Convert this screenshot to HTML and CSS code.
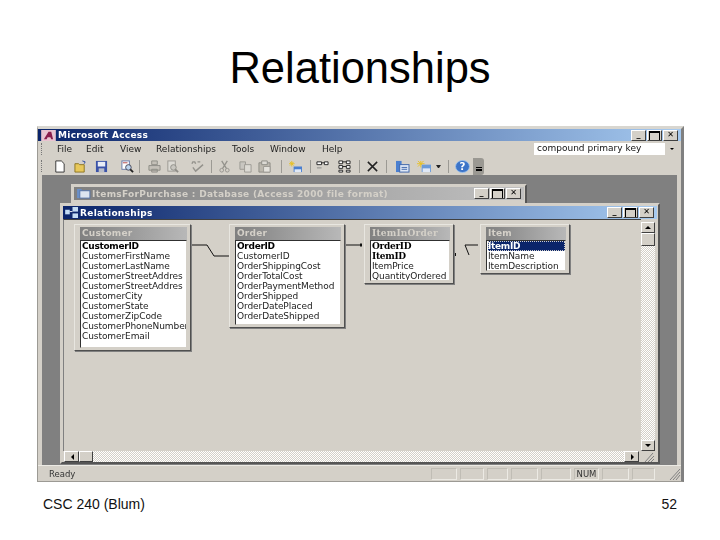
FILE: index.html
```html
<!DOCTYPE html>
<html lang="en">
<head>
<meta charset="utf-8">
<title>Relationships</title>
<link rel="stylesheet" href="styles.css">
</head>
<body>
<main class="slide">
  <h1 class="slide-title">Relationships</h1>
  <section class="app">
    <div class="titlebar app-title">
      <svg class="tb-icon" viewBox="0 0 16 12"><rect width="16" height="12" fill="#e9c3d0"/><path d="M3 10 8 2h3l2 8h-2l-1-2H7l-1 2z" fill="#8a1c4c"/></svg>
      <span class="title-text">Microsoft Access</span>
      <span class="win-btns"><i class="wb">_</i><i class="wb wb-max"></i><i class="wb">✕</i></span>
    </div>
    <div class="menubar">
      <span class="grip"></span>
      <nav class="menus"><span class="m1">File</span><span class="m2">Edit</span><span class="m3">View</span><span class="m4">Relationships</span><span class="m5">Tools</span><span class="m6">Window</span><span class="m7">Help</span></nav>
      <div class="combo"><span>compound primary key</span></div>
      <span class="combo-arrow"></span>
    </div>
    <div class="toolbar">
      <span class="grip"></span>
      <svg class="ti" viewBox="0 0 14 14"><path d="M3 1h6l3 3v9H3z" fill="#fff" stroke="#333"/></svg>
      <svg class="ti ml6" viewBox="0 0 14 14"><path d="M1 4h4l1 1h5v8H1z" fill="#e8c85a" stroke="#8a7420"/><path d="M9 1l3 1-1 2" fill="none" stroke="#2a4a9c"/></svg>
      <svg class="ti ml6" viewBox="0 0 14 14"><rect x="1" y="1" width="12" height="12" fill="#3a52a8"/><rect x="3" y="2" width="8" height="5" fill="#e8ecf6"/><rect x="4" y="9" width="6" height="4" fill="#b8bcc8"/></svg>
      <svg class="ti ml11" viewBox="0 0 14 14"><rect x="1" y="1" width="8" height="9" fill="#fff" stroke="#6678a8"/><circle cx="8" cy="8" r="3" fill="#bcd4ee" stroke="#445"/><path d="M10 10l3 3" stroke="#222" stroke-width="2"/><path d="M2 3h5" stroke="#b04040"/></svg>
      <i class="sep ml4"></i>
      <svg class="ti ml7" viewBox="0 0 14 14"><path d="M4 1h6v4H4zM1 6h12v5H1zM4 10h6v3H4z" fill="#c4c0b8" stroke="#8e8c86"/></svg>
      <svg class="ti ml3" viewBox="0 0 14 14"><rect x="2" y="1" width="8" height="11" fill="#dcdad4" stroke="#9a9892"/><circle cx="8" cy="8" r="3" fill="#c8c6c0" stroke="#8e8c86"/><path d="M10 10l3 3" stroke="#8e8c86" stroke-width="2"/></svg>
      <svg class="ti ml10" viewBox="0 0 14 14"><path d="M1 4l1-2h2l1 2M7 2h3M2 8l3 4 8-7" fill="none" stroke="#94928c" stroke-width="1.5"/></svg>
      <i class="sep ml6"></i>
      <svg class="ti ml5" viewBox="0 0 14 14"><path d="M4 1l5 8M10 1L5 9" stroke="#94928c" stroke-width="1.4"/><circle cx="4" cy="11" r="2" fill="none" stroke="#94928c"/><circle cx="10" cy="11" r="2" fill="none" stroke="#94928c"/></svg>
      <svg class="ti ml6" viewBox="0 0 14 14"><path d="M1 2h6v8H1z" fill="#c8c6c0" stroke="#9a9892"/><path d="M6 5h7v8H6z" fill="#dcdad4" stroke="#9a9892"/></svg>
      <svg class="ti ml4" viewBox="0 0 14 14"><path d="M1 3h12v10H1z" fill="#bcb8ae" stroke="#8e8c86"/><path d="M4 1h6v4H4z" fill="#dcdad4" stroke="#8e8c86"/><path d="M6 7h7v6H6z" fill="#e4e2dc" stroke="#9a9892"/></svg>
      <i class="sep ml9"></i>
      <svg class="ti ml6" viewBox="0 0 14 14"><path d="M3 1v6M0 4h6M1 2l4 4M5 2L1 6" stroke="#e8c020"/><rect x="5" y="7" width="9" height="6" fill="#4a7fd0"/><rect x="6" y="10" width="7" height="3" fill="#dfe8f6"/></svg>
      <i class="sep ml7"></i>
      <svg class="ti ml4" viewBox="0 0 14 14"><path d="M1 2h5v3H1zM9 2h4v3H9zM6 3h3" fill="#fff" stroke="#222"/><path d="M1 8h5v1H1z" fill="#888"/></svg>
      <svg class="ti ml7" viewBox="0 0 14 14"><path d="M1 1h4v3H1zM9 1h4v3H9zM1 6h4v3H1zM9 6h4v3H9zM1 11h4v2H1zM9 11h4v2H9zM5 2h4M5 7h4" fill="#fff" stroke="#222"/></svg>
      <i class="sep ml7"></i>
      <svg class="ti ml5" viewBox="0 0 14 14"><path d="M2 2l10 10M12 2L2 12" stroke="#222" stroke-width="1.6"/></svg>
      <i class="sep ml6"></i>
      <svg class="ti ml8" viewBox="0 0 16 14"><rect x="1" y="1" width="6" height="12" fill="#4a7fd0"/><rect x="5" y="5" width="10" height="8" fill="#dfe8f6" stroke="#3a62a8"/><path d="M7 8h6M7 10h6" stroke="#3a62a8"/></svg>
      <svg class="ti ml7" viewBox="0 0 16 14"><path d="M4 1v7M0 4h8M1 1l6 6M7 1L1 7" stroke="#e8c020"/><rect x="5" y="5" width="10" height="8" fill="#6a9ad8"/><rect x="6" y="9" width="8" height="4" fill="#dfe8f6"/></svg>
      <span class="mini-arrow ml4"></span>
      <i class="sep ml7"></i>
      <svg class="ti ml6" viewBox="0 0 16 14"><ellipse cx="8" cy="7" rx="7.5" ry="6.5" fill="#3c74c8" stroke="#9cc0ec"/><text class="help-q" x="8" y="11">?</text></svg>
      <span class="chevron ml3"><i></i></span>
    </div>
    <div class="mdi">
      <section class="mdi-win db-win">
        <div class="titlebar inactive">
          <svg class="tb-icon" viewBox="0 0 16 12"><rect x="1" y="1" width="5" height="10" fill="#6a90c8"/><rect x="4" y="3" width="11" height="8" fill="#dce4f0" stroke="#5070a8"/></svg>
          <span class="title-text">ItemsForPurchase : Database (Access 2000 file format)</span>
          <span class="win-btns"><i class="wb">_</i><i class="wb wb-max"></i><i class="wb">✕</i></span>
        </div>
      </section>
      <section class="mdi-win rel-win">
        <div class="titlebar">
          <svg class="tb-icon" viewBox="0 0 16 12"><rect y="3" width="5" height="5" fill="#c4dcf4"/><rect x="8" width="6" height="5" fill="#c4dcf4"/><rect x="8" y="7" width="6" height="5" fill="#c4dcf4"/><path d="M5 5h3" stroke="#fff"/></svg>
          <span class="title-text">Relationships</span>
          <span class="win-btns"><i class="wb">_</i><i class="wb wb-max"></i><i class="wb">✕</i></span>
        </div>
        <div class="rel-body">
          <div class="canvas">
            <svg class="links" viewBox="0 0 576 230" width="576" height="230">
              <path d="M127 25h16l7 11h15" />
              <path d="M281 25h16" />
              <rect x="296" y="23.5" width="2" height="3" />
              <rect x="390" y="33" width="2" height="3" />
              <path d="M414 25h-13l4 10" />
            </svg>
            <article class="tbl t-customer">
              <h2>Customer</h2>
              <ul>
                <li class="pk">CustomerID</li><li>CustomerFirstName</li><li>CustomerLastName</li><li>CustomerStreetAddres</li><li>CustomerStreetAddres</li><li>CustomerCity</li><li>CustomerState</li><li>CustomerZipCode</li><li>CustomerPhoneNumber</li><li>CustomerEmail</li>
              </ul>
            </article>
            <article class="tbl t-order">
              <h2>Order</h2>
              <ul>
                <li class="pk">OrderID</li><li>CustomerID</li><li>OrderShippingCost</li><li>OrderTotalCost</li><li>OrderPaymentMethod</li><li>OrderShipped</li><li>OrderDatePlaced</li><li>OrderDateShipped</li>
              </ul>
            </article>
            <article class="tbl t-iio">
              <h2 class="serif">ItemInOrder</h2>
              <ul>
                <li class="pk serif">OrderID</li><li class="pk serif">ItemID</li><li>ItemPrice</li><li>QuantityOrdered</li>
              </ul>
            </article>
            <article class="tbl t-item">
              <h2>Item</h2>
              <ul>
                <li class="pk sel">ItemID</li><li>ItemName</li><li>ItemDescription</li>
              </ul>
            </article>
          </div>
          <div class="vscroll"><i class="sb-btn up"></i><i class="sb-thumb"></i><span class="sb-track"></span><i class="sb-btn down"></i></div>
          <div class="hscroll"><i class="sb-btn left"></i><i class="sb-thumb"></i><span class="sb-track"></span><i class="sb-btn right"></i></div>
          <div class="corner"><svg class="hatch" viewBox="0 0 12 10"><path d="M2 10l8-9M5 10l6-6M8 10l3-3" stroke="#808080" fill="none"/></svg></div>
        </div>
      </section>
    </div>
    <footer class="status">
      <span class="st-ready">Ready</span>
      <span class="panel w26"></span><span class="panel w24"></span><span class="panel w21"></span><span class="panel w27"></span><span class="panel w30"></span><span class="panel w25">NUM</span><span class="panel w27"></span><span class="panel w23"></span>
      <svg class="st-grip" viewBox="0 0 13 12"><path d="M2 12l10-11M5 12l7-8M8 12l4-5" stroke="#808080" fill="none"/></svg>
    </footer>
  </section>
  <footer class="slide-foot"><span>CSC 240 (Blum)</span><span>52</span></footer>
</main>
</body>
</html>
```
FILE: styles.css
```css
* { box-sizing: border-box; }
html, body { margin: 0; padding: 0; background: #fff; }
body { width: 720px; height: 540px; overflow: hidden; font-family: "Liberation Sans", Arial, sans-serif; }
.slide { width: 720px; height: 540px; display: flex; flex-direction: column; }
.slide-title { margin: 0; height: 126px; padding-top: 43px; text-align: center; font-weight: 400; font-size: 43.5px; line-height: 50px; color: #000; }
.app { margin-left: 37px; width: 647px; height: 356px; background: #d4d0c8; border: 1px solid #9c9a94; border-top: 3px solid #d8d6d0; border-right: 3px solid #808080; display: flex; flex-direction: column; filter: blur(.4px); font-family: "DejaVu Sans", sans-serif; }
.slide-foot { flex: 1; display: flex; justify-content: space-between; padding: 13px 43px 0 43px; font-size: 14px; line-height: 18px; color: #111; }

.titlebar { height: 13px; display: flex; align-items: center; background: linear-gradient(90deg, #0a246a, #a6caf0); color: #fff; padding: 0 3px 0 2px; flex: none; }
.app-title { height: 12px; padding-left: 3px; }
.titlebar.inactive { background: linear-gradient(90deg, #808080, #c0c0c0); color: #d4d0c8; }
.tb-icon { width: 15px; height: 11px; flex: none; margin-right: 2px; }
.db-win .tb-icon { margin-right: 1px; }
.rel-win .tb-icon { margin-right: 0; }
.title-text { font-size: 9px; font-weight: 700; line-height: 12px; white-space: nowrap; letter-spacing: .3px; }
.win-btns { margin-left: auto; display: flex; }
.wb { width: 15px; height: 11px; margin-left: 1px; background: #d4d0c8; border: 1px solid; border-color: #fff #404040 #404040 #fff; color: #000; font: 700 8px/8px "DejaVu Sans", sans-serif; text-align: center; overflow: hidden; }
.wb-max::after { content: ""; display: block; margin: 0 auto; width: 9px; height: 7px; border: 1px solid #000; border-top-width: 2px; }

.menubar { height: 16px; display: flex; align-items: center; flex: none; padding-left: 3px; font-size: 9px; color: #222; }
.grip { width: 2px; height: 12px; border-left: 1px dotted #777; flex: none; }
.menus { width: 491px; display: flex; padding-left: 14px; }
.menus span { white-space: nowrap; flex: none; }
.m1 { width: 29px; } .m2 { width: 34px; } .m3 { width: 36px; } .m4 { width: 76px; } .m5 { width: 38px; } .m6 { width: 52px; }
.combo { width: 131px; height: 12px; background: #fff; line-height: 11px; padding-left: 3px; color: #111; white-space: nowrap; overflow: hidden; }
.combo-arrow { margin-left: 5px; width: 0; height: 0; border: 2px solid transparent; border-top: 2px solid #000; border-bottom: 0; }

.toolbar { height: 18px; display: flex; align-items: center; flex: none; padding-left: 3px; }
.toolbar .grip { margin-right: 9px; }
.ti { width: 15px; height: 13px; flex: none; }
.ml3 { margin-left: 3px; } .ml4 { margin-left: 4px; } .ml5 { margin-left: 5px; } .ml6 { margin-left: 6px; } .ml7 { margin-left: 7px; } .ml8 { margin-left: 8px; } .ml9 { margin-left: 9px; } .ml10 { margin-left: 10px; } .ml11 { margin-left: 11px; }
.sep { width: 1px; height: 13px; background: #9c9a94; flex: none; }
.mini-arrow { width: 5px; height: 0; border: 2px solid transparent; border-top: 3px solid #222; border-bottom: 0; flex: none; }
.help-q { font: 700 11px "DejaVu Sans", sans-serif; fill: #fff; text-anchor: middle; }
.chevron { width: 11px; height: 17px; background: #9a9892; border-radius: 0 3px 3px 0; position: relative; flex: none; }
.chevron i { position: absolute; left: 3px; bottom: 3px; width: 6px; height: 5px; border-top: 1px solid #000; background: linear-gradient(#000 2px, transparent 2px) 0 1px no-repeat; }

.mdi { flex: 1; position: relative; margin: 0 4px; background: #808080; }
.mdi-win { position: absolute; background: #d4d0c8; border: 2px solid #d4d0c8; border-right-color: #555; border-bottom-color: #555; padding: 1px 1px 0 1px; display: flex; flex-direction: column; }
.db-win { left: 29px; top: 9px; width: 456px; height: 24px; }
.rel-win { left: 18px; top: 28px; width: 600px; height: 261px; }
.rel-body { flex: 1; display: grid; grid-template-columns: 578px 14px; grid-template-rows: 232px 11px; min-height: 0; }

.canvas { position: relative; overflow: hidden; border-left: 1px solid #808080; border-top: 1px solid #404040; }
.links { position: absolute; left: 0; top: 0; }
.links path { fill: none; stroke: #111; stroke-width: 1; }
.links rect { fill: #111; }
.tbl { position: absolute; background: #d4d0c8; border: 1px solid; border-color: #e8e6e0 #505050 #505050 #e8e6e0; box-shadow: inset 0 0 0 1px #d4d0c8, 1px 1px 0 #808080; padding: 2px 3px 2px 5px; display: flex; flex-direction: column; }
.tbl h2 { margin: 0; height: 13px; font-size: 9px; line-height: 13px; font-weight: 700; color: #d4d0c8; padding-left: 2px; background: linear-gradient(90deg, #808080, #b8b8b8); flex: none; letter-spacing: .2px; }
.tbl ul { list-style: none; margin: 0; padding: 0 0 0 1px; background: #fff; border: 1px solid; border-color: #303030 #d4d0c8 #d4d0c8 #303030; flex: 1; overflow: hidden; }
.tbl li { height: 10px; font-size: 9px; line-height: 10px; color: #222; white-space: nowrap; letter-spacing: -.08px; }
.tbl li.pk { font-weight: 700; color: #000; letter-spacing: -.3px; }
.tbl .serif { font-family: "DejaVu Serif", serif; }
.tbl li.sel { background: #0a246a; color: #fff; outline: 1px dotted #ccc; outline-offset: -1px; }
.t-customer { left: 10px; top: 4px; width: 117px; height: 127px; }
.t-order { left: 165px; top: 4px; width: 116px; height: 104px; }
.t-iio { left: 300px; top: 4px; width: 90px; height: 60px; }
.t-item { left: 416px; top: 4px; width: 90px; height: 50px; }

.vscroll, .hscroll { display: flex; background: repeating-conic-gradient(#fff 0 25%, #d4d0c8 0 50%) 0 0 / 2px 2px; }
.vscroll { flex-direction: column; margin-top: 3px; }
.hscroll { margin: 0 2px 0 1px; }
.sb-track { flex: 1; }
.sb-btn, .sb-thumb { flex: none; background: #d4d0c8; border: 1px solid; border-color: #fff #404040 #404040 #fff; position: relative; }
.vscroll .sb-btn { height: 11px; } .vscroll .sb-thumb { height: 13px; }
.hscroll .sb-btn { width: 15px; } .hscroll .sb-thumb { width: 14px; }
.sb-btn::after { content: ""; position: absolute; left: 50%; top: 50%; margin: -2px 0 0 -3px; border: 3px solid transparent; width: 0; height: 0; }
.up::after { border-bottom-color: #000; border-top: 0; }
.down::after { border-top-color: #000; border-bottom: 0; }
.left::after { border-right-color: #000; border-left: 0; margin-left: -1px; margin-top: -3px; }
.right::after { border-left-color: #000; border-right: 0; margin-left: -1px; margin-top: -3px; }
.corner { background: #d4d0c8; display: flex; align-items: flex-end; justify-content: flex-end; }
.hatch { width: 12px; height: 10px; }

.status { flex: none; height: 16px; display: flex; align-items: center; padding: 1px 0 0 11px; border-top: 1px solid #eceae4; font-size: 8.5px; color: #333; }
.st-ready { margin-right: auto; }
.panel { height: 12px; margin-left: 3px; border: 1px solid; border-color: #c0bdb5 #eceae4 #eceae4 #c0bdb5; line-height: 10px; text-align: center; }
.w26 { width: 26px; } .w24 { width: 24px; } .w21 { width: 21px; } .w27 { width: 27px; } .w30 { width: 30px; } .w25 { width: 25px; } .w23 { width: 23px; }
.st-grip { width: 13px; height: 12px; margin-left: 13px; flex: none; }
```
